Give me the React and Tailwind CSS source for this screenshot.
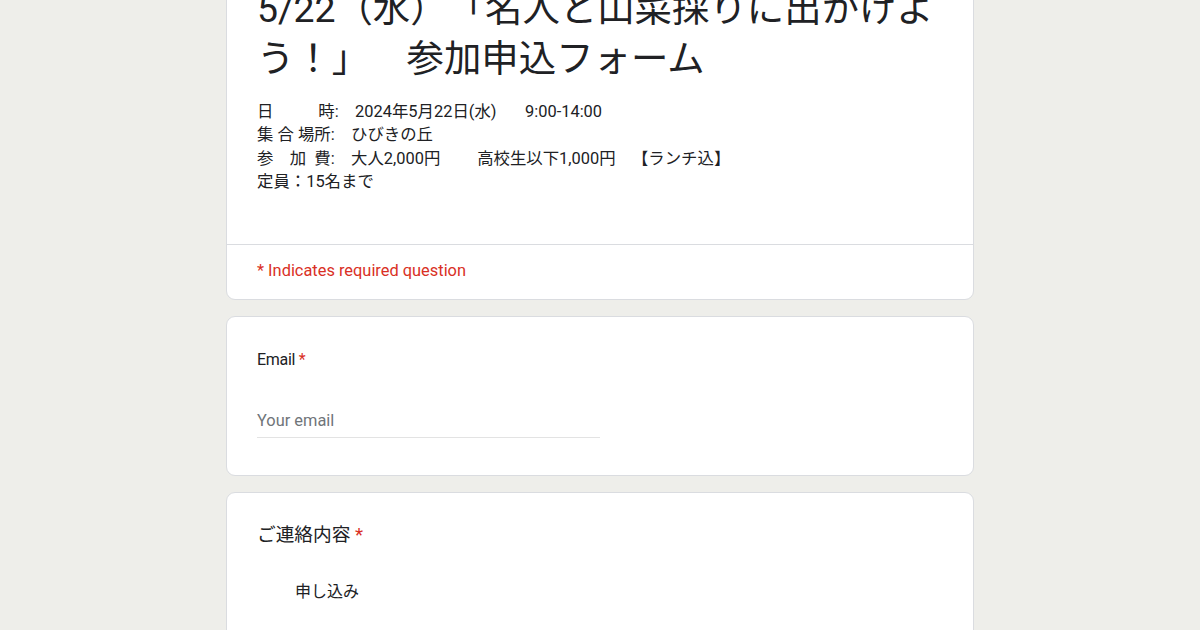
export default function App() {
  return (
    <div className="h-[630px] overflow-hidden bg-[#eeeeea] font-['Roboto','Noto_Sans_CJK_JP',sans-serif] text-[#202124] [text-spacing-trim:space-all]">
      <div className="w-[748px] mx-auto -mt-[47px] flex flex-col gap-4">
        <div className="bg-white rounded-[9px] border border-[#dadce0]">
          <div className="px-[30px] pt-[30px] pb-[50px]">
            <h1 className="text-[37.4px] leading-[50px] font-normal">
              5/22（水）「名人と山菜採りに出かけよう！」　参加申込フォーム
            </h1>
            <div className="mt-[16px] text-[16.4px] leading-[23.4px] whitespace-pre">
              <div>{"日　　   時:　2024年5月22日(水)　   9:00-14:00"}</div>
              <div>{"集 合 場所:　ひびきの丘"}</div>
              <div>{"参　加  費:　大人2,000円　　 高校生以下1,000円　【ランチ込】"}</div>
              <div>{"定員：15名まで"}</div>
            </div>
          </div>
          <div className="border-t border-[#dadce0] px-[30px] pt-[14px] pb-[17px]">
            <p className="text-[16.4px] leading-[23.4px] text-[#d93025]">* Indicates required question</p>
          </div>
        </div>

        <div className="bg-white rounded-[9px] border border-[#dadce0] px-[30px] pt-[31px] pb-[37px]">
          <div className="text-[16px] leading-6 tracking-[-0.3px]">
            Email <span className="text-[#d93025]">*</span>
          </div>
          <div className="mt-[33px] w-1/2 h-[33px] border-b border-[#e3e3e3] flex items-center">
            <span className="text-[16.4px] leading-6 text-[#70757a]">Your email</span>
          </div>
        </div>

        <div className="bg-white rounded-[9px] border border-[#dadce0] px-[30px] pt-[30px] pb-[60px]">
          <div className="text-[18.7px] leading-6">
            ご連絡内容 <span className="text-[#d93025]">*</span>
          </div>
          <div className="mt-[33px] pl-[38px] text-[16px] leading-6">申し込み</div>
        </div>
      </div>
    </div>
  );
}
